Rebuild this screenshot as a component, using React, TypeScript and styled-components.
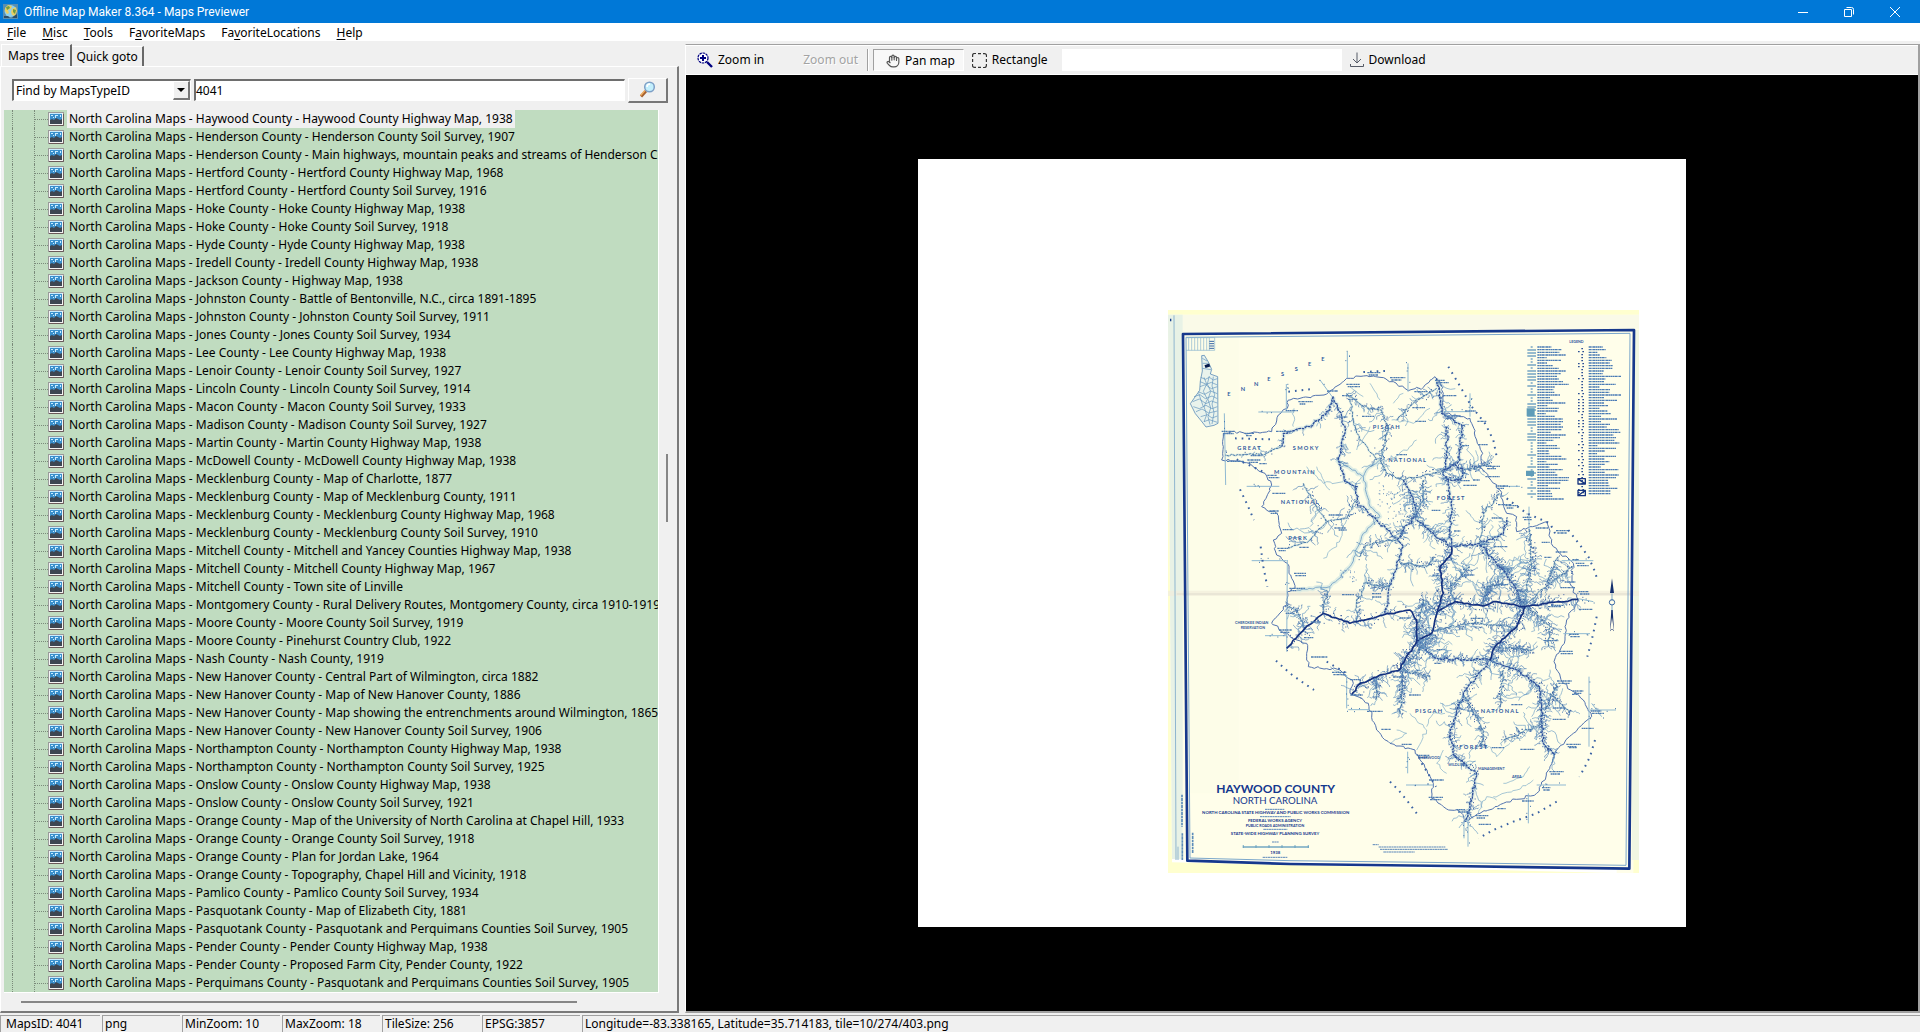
import React from "react";
import styled, { createGlobalStyle, css } from "styled-components";
import { Hand } from "lucide-react";

const face = "#f0f0f0";
const ui = '"Noto Sans", Tahoma, sans-serif';

const Global = createGlobalStyle`
  * { box-sizing: border-box; }
  html, body, #root { height: 100%; margin: 0; }
  body { overflow: hidden; background: ${face}; color: #000; font: 12px/18px ${ui}; }
  button, input, select { font: inherit; color: inherit; margin: 0; padding: 0; border: 0; border-radius: 0; background: none; outline: 0; }
`;

const Window = styled.div`
  display: flex;
  flex-direction: column;
  height: 100vh;
`;

const TitleBar = styled.header`
  display: flex;
  align-items: center;
  flex: none;
  height: 23px;
  padding-left: 3px;
  background: #0078d7;
  color: #fff;
`;

const Title = styled.h1`
  flex: 1;
  margin: 0 0 0 6px;
  font: 400 12px/20px Roboto, sans-serif;
`;

const WindowButton = styled.button`
  display: grid;
  place-items: center;
  width: 46px;
  height: 20px;

  &:last-child { margin-right: 2px; }
`;

const MenuBar = styled.nav`
  display: flex;
  flex: none;
  gap: 16px;
  height: 18px;
  padding: 1px 0 0 7px;
  background: #fff;
`;

const MenuItem = styled.button`
  height: 17px;
  line-height: 17px;
  u { text-underline-offset: 2px; }
`;

const Workspace = styled.main`
  display: flex;
  flex: 1;
  min-height: 0;
  gap: 6px;
`;

const Sidebar = styled.section`
  display: flex;
  flex-direction: column;
  width: 679px;
  flex: none;
  padding-top: 3px;
`;

const Tabs = styled.div`
  display: flex;
  align-items: flex-end;
  height: 22px;
  padding-left: 1px;
`;

const Tab = styled.button<{ $active?: boolean }>`
  height: ${(p) => (p.$active ? 22 : 20)}px;
  padding: 0 ${(p) => (p.$active ? 6 : 4)}px;
  border: solid #fff;
  border-width: 1px 0 0 ${(p) => (p.$active ? 1 : 0)}px;
  border-right: 2px solid #696969;
  line-height: ${(p) => (p.$active ? 18 : 19)}px;
`;

const TabPage = styled.div`
  display: flex;
  flex-direction: column;
  flex: 1;
  min-height: 0;
  padding: 11px 9px 0 3px;
  border: solid;
  border-width: 1px 2px 2px 1px;
  border-color: #fff #7a7a7a #7a7a7a #fff;
`;

const SearchRow = styled.form`
  display: flex;
  align-items: center;
  height: 24px;
  padding-left: 8px;
`;

const sunken = css`
  border: solid;
  border-width: 2px 1px 1px 2px;
  border-color: #6e6e6e #fff #fff #6e6e6e;
  background: #fff;
`;

const Combo = styled.div`
  ${sunken}
  position: relative;
  width: 179px;
  height: 22px;
  margin-right: 3px;
`;

const ComboSelect = styled.select`
  display: block;
  appearance: none;
  width: 100%;
  height: 19px;
  padding-left: 2px;
`;

const ComboArrow = styled.span`
  position: absolute;
  top: 0;
  right: 0;
  display: grid;
  place-items: center;
  width: 17px;
  height: 19px;
  border: solid;
  border-width: 1px 2px 2px 1px;
  border-color: #fff #777 #777 #fff;
  background: ${face};
  pointer-events: none;
`;

const SearchInput = styled.input`
  ${sunken}
  flex: 1;
  min-width: 0;
  height: 22px;
  margin-right: 3px;
`;

const SearchButton = styled.button`
  display: grid;
  place-items: center;
  width: 40px;
  height: 25px;
  border: solid;
  border-width: 1px 2px 2px 1px;
  border-color: #fff #777 #777 #fff;
`;

const TreeArea = styled.div`
  display: grid;
  grid-template: minmax(0, 1fr) 18px / minmax(0, 1fr) 9px;
  flex: 1;
  min-height: 0;
  margin-top: 8px;
`;

const Tree = styled.ul`
  margin: 0;
  padding: 0;
  overflow: hidden;
  list-style: none;
  background: #c0dcc0;
  border: solid #fff;
  border-width: 0 1px 1px 0;
`;

const TreeRow = styled.li`
  display: flex;
  align-items: center;
  height: 18px;
  white-space: nowrap;
`;

const Guides = styled.span`
  flex: none;
  align-self: stretch;
  box-sizing: content-box;
  width: 21px;
  margin-left: 8px;
  border: dotted #7a8a7a;
  border-width: 0 1px;
`;

const Branch = styled.span`
  flex: none;
  width: 13px;
  border-top: 1px dotted #7a8a7a;
`;

const RowText = styled.span<{ $selected?: boolean }>`
  margin-left: 3px;
  padding: 0 2px;
  background: ${(p) => (p.$selected ? face : "none")};
`;

const ScrollTrackY = styled.div`
  display: flex;
  flex-direction: column;
  align-items: flex-end;
`;

const ScrollThumbY = styled.span`
  width: 2px;
  height: 68px;
  background: #868686;
`;

const ScrollTrackX = styled.div`
  display: flex;
  align-items: center;
  padding-left: 17px;
`;

const ScrollThumbX = styled.span`
  width: 556px;
  height: 2px;
  background: #868686;
`;

const Spacer = styled.span<{ $grow: number }>`
  flex: ${(p) => p.$grow} 1 0;
`;

const Viewer = styled.section`
  display: flex;
  flex-direction: column;
  flex: 1;
  min-width: 0;
  margin-top: 3px;
  border: solid;
  border-width: 1px 2px 2px 1px;
  border-color: #a0a0a0 #a0a0a0 #a0a0a0 #fff;
`;

const ToolBar = styled.div`
  display: flex;
  align-items: center;
  flex: none;
  height: 30px;
  padding-left: 11px;
  border: solid #fff;
  border-width: 1px 0;
`;

const Tool = styled.button<{ $pressed?: boolean }>`
  display: flex;
  align-items: center;
  gap: 5px;
  height: 22px;
  white-space: nowrap;
  &:disabled { color: #a3a3a3; text-shadow: 1px 1px #fff; margin-left: 39px; }
  ${(p) =>
    p.$pressed &&
    css`
      margin-right: 8px;
      padding: 1px 8px 0 12px;
      border: solid;
      border-width: 1px;
      border-color: #a0a0a0 #fff #fff #a0a0a0;
      background: #f8f8f8;
    `}
`;

const Divider = styled.span`
  width: 2px;
  height: 22px;
  margin: 0 4px 0 9px;
  border-left: 1px solid #a0a0a0;
  border-right: 1px solid #fff;
`;

const ToolInput = styled.input`
  width: 280px;
  height: 22px;
  margin: 0 8px 0 14px;
  background: #fff;
`;

const Canvas = styled.div`
  display: grid;
  place-items: center;
  flex: 1;
  min-height: 0;
  overflow: hidden;
  background: #000;
`;

const Tile = styled.div`
  width: 768px;
  height: 768px;
  padding: 151px 0 0 250px;
  background: #fff;
`;

const StatusBar = styled.footer`
  display: flex;
  flex: none;
  gap: 2px;
  height: 19px;
  padding-top: 2px;
`;

const Cell = styled.span<{ $w?: number }>`
  ${(p) => (p.$w ? `width: ${p.$w}px;` : "flex: 1;")}
  padding-left: 2px;
  border: solid #a0a0a0;
  border-width: 1px 0 0 1px;
  line-height: 16px;
  white-space: nowrap;
  &:first-child { padding-left: 5px; }
`;

const entries = [
  "Haywood County - Haywood County Highway Map, 1938",
  "Henderson County - Henderson County Soil Survey, 1907",
  "Henderson County - Main highways, mountain peaks and streams of Henderson County",
  "Hertford County - Hertford County Highway Map, 1968",
  "Hertford County - Hertford County Soil Survey, 1916",
  "Hoke County - Hoke County Highway Map, 1938",
  "Hoke County - Hoke County Soil Survey, 1918",
  "Hyde County - Hyde County Highway Map, 1938",
  "Iredell County - Iredell County Highway Map, 1938",
  "Jackson County - Highway Map, 1938",
  "Johnston County - Battle of Bentonville, N.C., circa 1891-1895",
  "Johnston County - Johnston County Soil Survey, 1911",
  "Jones County - Jones County Soil Survey, 1934",
  "Lee County - Lee County Highway Map, 1938",
  "Lenoir County - Lenoir County Soil Survey, 1927",
  "Lincoln County - Lincoln County Soil Survey, 1914",
  "Macon County - Macon County Soil Survey, 1933",
  "Madison County - Madison County Soil Survey, 1927",
  "Martin County - Martin County Highway Map, 1938",
  "McDowell County - McDowell County Highway Map, 1938",
  "Mecklenburg County - Map of Charlotte, 1877",
  "Mecklenburg County - Map of Mecklenburg County, 1911",
  "Mecklenburg County - Mecklenburg County Highway Map, 1968",
  "Mecklenburg County - Mecklenburg County Soil Survey, 1910",
  "Mitchell County - Mitchell and Yancey Counties Highway Map, 1938",
  "Mitchell County - Mitchell County Highway Map, 1967",
  "Mitchell County - Town site of Linville",
  "Montgomery County - Rural Delivery Routes, Montgomery County, circa 1910-1919",
  "Moore County - Moore County Soil Survey, 1919",
  "Moore County - Pinehurst Country Club, 1922",
  "Nash County - Nash County, 1919",
  "New Hanover County - Central Part of Wilmington, circa 1882",
  "New Hanover County - Map of New Hanover County, 1886",
  "New Hanover County - Map showing the entrenchments around Wilmington, 1865",
  "New Hanover County - New Hanover County Soil Survey, 1906",
  "Northampton County - Northampton County Highway Map, 1938",
  "Northampton County - Northampton County Soil Survey, 1925",
  "Onslow County - Onslow County Highway Map, 1938",
  "Onslow County - Onslow County Soil Survey, 1921",
  "Orange County - Map of the University of North Carolina at Chapel Hill, 1933",
  "Orange County - Orange County Soil Survey, 1918",
  "Orange County - Plan for Jordan Lake, 1964",
  "Orange County - Topography, Chapel Hill and Vicinity, 1918",
  "Pamlico County - Pamlico County Soil Survey, 1934",
  "Pasquotank County - Map of Elizabeth City, 1881",
  "Pasquotank County - Pasquotank and Perquimans Counties Soil Survey, 1905",
  "Pender County - Pender County Highway Map, 1938",
  "Pender County - Proposed Farm City, Pender County, 1922",
  "Perquimans County - Pasquotank and Perquimans Counties Soil Survey, 1905",
];

const menus: [string, string, string][] = [
  ["", "F", "ile"],
  ["", "M", "isc"],
  ["", "T", "ools"],
  ["F", "a", "voriteMaps"],
  ["Fa", "v", "oriteLocations"],
  ["", "H", "elp"],
];

const status: [string, number?][] = [
  ["MapsID: 4041", 100],
  ["png", 78],
  ["MinZoom: 10", 98],
  ["MaxZoom: 18", 98],
  ["TileSize: 256", 98],
  ["EPSG:3857", 98],
  ["Longitude=-83.338165, Latitude=35.714183, tile=10/274/403.png"],
];

const GlobeIcon = () => (
  <svg width="15" height="15" viewBox="0 0 15 15" aria-hidden="true">
    <rect width="15" height="15" fill="#5a8fb0" />
    <circle cx="7.5" cy="7" r="6" fill="#8fd0ee" />
    <path d="M2 4 5 1l4 1-1 3-3 1 1 3-2 1-2-3zM9 5l4-2 1 4-2 5-3-1-1-3z" fill="#e9cf62" />
    <path d="M3 3l3-1 1 2-3 2zM10 5l3 1-1 4-2-2z" fill="#6f9b46" />
    <path d="M1 12h4l2 2H1zM11 12l3-2v4H9z" fill="#2d4f68" />
  </svg>
);

const PictureGlyph = styled.svg`
  flex: none;
`;

const PictureIcon = () => (
  <PictureGlyph width="16" height="16" viewBox="0 0 16 16" aria-hidden="true">
    <path d="M0 1h16v14H0z" fill="#9a9a9a" />
    <path d="M1 2h14v12H1z" fill="#f4f4f4" />
    <path d="M2 2h12v11H2z" fill="#3a8fcc" />
    <path d="M2 2h12v1H2zM3 4h2v1H3zM7 4h3v1H8v2H7zM12 4h1v2h-1zM5 6h1v1H5z" fill="#c9ecff" />
    <path d="M2 9l2-1 2 1 2-2 2 1 2 1 2-1v5H2z" fill="#3d4652" />
    <path d="M1 14.500h14.500V3" fill="none" stroke="#6a5a5a" />
  </PictureGlyph>
);

const LensIcon = () => (
  <svg width="17" height="17" viewBox="0 0 17 17" aria-hidden="true">
    <path d="M2 15.500 7 10" stroke="#a45f2d" strokeWidth="3" />
    <path d="M1.500 14.500 6 9.500" stroke="#efae63" strokeWidth="1.500" />
    <circle cx="10.500" cy="6" r="4.800" fill="#c3effc" stroke="#7d9fc6" strokeWidth="1.500" />
    <path d="M8 6q0-3 3-3" fill="none" stroke="#fff" strokeWidth="1.500" />
  </svg>
);

const ZoomInIcon = () => (
  <svg width="16" height="16" viewBox="0 0 16 16" aria-hidden="true" fill="none" stroke="#000080">
    <circle cx="6" cy="6" r="5" fill="#fff" strokeWidth="1.200" strokeDasharray="2.500 .7" />
    <path d="M6 3v6M3 6h6" strokeWidth="2" />
    <path d="M10 10l5 5" strokeWidth="2.400" />
  </svg>
);

const RectIcon = () => (
  <svg width="15" height="15" viewBox="0 0 15 15" aria-hidden="true" fill="none" stroke="#333" strokeWidth="1.200">
    <path d="M.6 4V2.500q0-2 2-2H4M6 .6h3M11 .6h1.500q2 0 2 2V4M14.400 6v3M14.400 11v1.500q0 2-2 2H11M9 14.400H6M4 14.400H2.500q-2 0-2-2V11M.6 9V6" />
  </svg>
);

const DownloadIcon = () => (
  <svg width="14" height="16" viewBox="0 0 14 16" aria-hidden="true" fill="none" stroke="#555a66">
    <path d="M7 .5V11M3 7l4 4 4-4M.5 12v2.500h13V12" />
  </svg>
);

type Pt = [number, number];

const boundary: Pt[] = [
  [220, 400], [245, 395], [300, 400], [365, 395], [385, 345], [412, 325], [415, 300], [460, 292], [530, 282], [550, 268],
  [590, 235], [640, 228], [690, 232], [730, 245], [775, 272], [820, 262], [855, 230], [870, 245], [880, 280], [875, 340],
  [930, 350], [960, 355], [980, 420], [998, 460], [990, 500], [1050, 570], [1070, 640], [1100, 650], [1100, 695],
  [1140, 680], [1190, 665], [1210, 740], [1270, 790], [1260, 850], [1285, 900], [1250, 960], [1245, 1020], [1212, 1085],
  [1240, 1150], [1300, 1200], [1325, 1250], [1270, 1300], [1220, 1350], [1200, 1400], [1160, 1480], [1060, 1510],
  [990, 1540], [945, 1565], [930, 1535], [880, 1520], [845, 1495], [850, 1450], [795, 1350], [720, 1330], [680, 1290],
  [655, 1210], [600, 1180], [610, 1150], [570, 1110], [475, 1100], [470, 1030], [420, 1010], [365, 970], [410, 915],
  [412, 875], [435, 865], [412, 790], [380, 765], [370, 720], [395, 700], [380, 640], [335, 620], [365, 555], [345, 520],
  [290, 488], [215, 480], [220, 400],
];

const highways: Pt[][] = [
  [[605, 1185], [625, 1155], [690, 1125], [745, 1112], [800, 1025], [845, 1000], [862, 935], [915, 905], [1000, 918], [1030, 905], [1120, 920], [1285, 898]],
  [[410, 1045], [465, 985], [520, 940], [600, 970], [700, 945], [780, 930], [800, 960], [800, 1025]],
  [[862, 935], [880, 880], [870, 800], [905, 760], [905, 740]],
  [[1125, 920], [1100, 980], [1035, 1040], [1020, 1080]],
];

// Each secondary road carries the number and reach of the creeks that leave it.
const roads: { at: Pt[]; creeks: number; reach: number; dark?: boolean }[] = [
  { at: [[550, 290], [575, 350], [585, 400], [565, 480], [585, 545], [620, 560], [620, 610], [680, 660], [740, 715], [760, 740], [725, 840], [705, 940]], creeks: 36, reach: 16, dark: true },
  { at: [[1020, 1080], [940, 1180], [900, 1300], [915, 1370], [980, 1420], [965, 1500], [945, 1565]], creeks: 70, reach: 18, dark: true },
  { at: [[1020, 1080], [1100, 1110], [1170, 1160], [1180, 1330], [1215, 1365]], creeks: 70, reach: 20, dark: true },
  { at: [[860, 235], [870, 280], [875, 340], [935, 375], [930, 480], [890, 510], [890, 380]], creeks: 40, reach: 14, dark: true },
  { at: [[880, 510], [905, 495], [940, 505], [935, 535], [900, 540], [880, 525], [880, 510]], creeks: 26, reach: 18, dark: true },
  { at: [[895, 540], [905, 620], [900, 700], [905, 740], [990, 730], [1060, 700], [1070, 660]], creeks: 36, reach: 18, dark: true },
  { at: [[990, 730], [1000, 640], [1050, 580]], creeks: 16, reach: 16 },
  { at: [[990, 735], [1060, 810], [1100, 870], [1120, 920]], creeks: 60, reach: 24, dark: true },
  { at: [[1140, 690], [1145, 800], [1130, 860], [1120, 920]], creeks: 34, reach: 22 },
  { at: [[1270, 800], [1200, 850], [1120, 920]], creeks: 24, reach: 20 },
  { at: [[1225, 770], [1190, 850]], creeks: 12, reach: 18 },
  { at: [[550, 290], [540, 330], [480, 380], [400, 400], [395, 440]], creeks: 12, reach: 14, dark: true },
  { at: [[395, 440], [340, 465], [225, 465]], creeks: 4, reach: 16 },
  { at: [[460, 550], [500, 620], [530, 665], [590, 655], [620, 600]], creeks: 16, reach: 24 },
  { at: [[530, 665], [480, 720], [415, 745]], creeks: 6, reach: 26 },
  { at: [[860, 265], [790, 310], [740, 360]], creeks: 12, reach: 16 },
  { at: [[590, 280], [640, 320], [695, 330], [715, 390], [690, 480], [710, 520], [760, 540], [880, 510]], creeks: 40, reach: 18 },
  { at: [[600, 300], [620, 400], [680, 480]], creeks: 6, reach: 26 },
  { at: [[760, 540], [790, 600], [800, 640], [760, 690], [740, 720]], creeks: 30, reach: 22, dark: true },
  { at: [[820, 540], [820, 600], [790, 650]], creeks: 20, reach: 18 },
  { at: [[800, 660], [850, 700], [905, 740]], creeks: 20, reach: 18, dark: true },
  { at: [[940, 510], [990, 500], [1020, 490]], creeks: 18, reach: 20 },
  { at: [[800, 1030], [860, 1075], [1020, 1080]], creeks: 32, reach: 18, dark: true },
  { at: [[860, 990], [960, 970], [1060, 975], [1100, 985]], creeks: 34, reach: 20 },
  { at: [[1130, 920], [1200, 980], [1195, 1040]], creeks: 26, reach: 20 },
  { at: [[1035, 1040], [1090, 1045], [1150, 1050]], creeks: 26, reach: 16 },
  { at: [[760, 1110], [755, 1180], [750, 1240]], creeks: 34, reach: 14 },
  { at: [[745, 1112], [800, 1060], [845, 1000]], creeks: 40, reach: 28 },
  { at: [[680, 1130], [680, 1200]], creeks: 14, reach: 16 },
  { at: [[760, 1110], [840, 1130]], creeks: 16, reach: 14 },
  { at: [[1060, 1110], [1050, 1220]], creeks: 14, reach: 16 },
  { at: [[945, 1190], [1000, 1290], [995, 1340]], creeks: 30, reach: 16 },
  { at: [[1180, 1270], [1110, 1300], [1060, 1320]], creeks: 18, reach: 16 },
  { at: [[1185, 1230], [1220, 1150]], creeks: 14, reach: 14 },
  { at: [[1200, 1180], [1260, 1240]], creeks: 12, reach: 12 },
  { at: [[740, 720], [650, 735], [630, 770]], creeks: 14, reach: 20 },
  { at: [[750, 790], [830, 800], [850, 770]], creeks: 18, reach: 20 },
  { at: [[720, 860], [640, 850]], creeks: 16, reach: 18 },
  { at: [[520, 940], [530, 870]], creeks: 10, reach: 18 },
  { at: [[620, 970], [620, 900], [640, 870]], creeks: 10, reach: 16 },
  { at: [[860, 935], [820, 900], [800, 1000]], creeks: 34, reach: 24 },
  { at: [[915, 905], [900, 860], [960, 800]], creeks: 26, reach: 20 },
  { at: [[1000, 918], [1010, 860], [1060, 850]], creeks: 34, reach: 22 },
  { at: [[465, 985], [440, 930], [410, 915]], creeks: 14, reach: 16 },
];

const parkways: Pt[][] = [
  [[560, 480], [640, 530], [660, 500], [690, 480]],
  [[640, 530], [660, 620], [690, 650], [640, 700], [600, 800], [540, 860], [440, 870]],
];

const streams: Pt[][] = [
  [[590, 660], [560, 740], [520, 775]], [[430, 380], [432, 325]], [[730, 480], [800, 420]],
  [[725, 360], [790, 370], [840, 325]], [[620, 450], [660, 380]], [[690, 300], [660, 250]],
  [[730, 310], [760, 280]], [[640, 290], [600, 260]], [[780, 1240], [830, 1290], [800, 1350]],
  [[885, 1240], [850, 1240], [830, 1280]], [[890, 1420], [860, 1390], [880, 1350]], [[1060, 1450], [1120, 1430], [1140, 1400]],
  [[1030, 1490], [1100, 1470], [1150, 1440]], [[1020, 1340], [1040, 1370], [1080, 1330]], [[740, 1290], [770, 1300], [720, 1330]],
  [[985, 1540], [1010, 1490], [1040, 1500]], [[540, 1100], [590, 1130]], [[1060, 660], [1030, 640]],
  [[355, 455], [400, 430]], [[470, 500], [520, 550], [580, 545]], [[500, 500], [540, 570]],
];

const dotRows: Pt[][] = [
  [[895, 200], [925, 250], [965, 320], [1005, 370], [1030, 420], [1042, 480]],
  [[1255, 690], [1290, 735], [1315, 770], [1335, 815], [1342, 840]],
  [[1340, 950], [1330, 1000], [1320, 1040], [1312, 1070]],
  [[1335, 1320], [1320, 1370], [1300, 1410], [1287, 1430]],
  [[1220, 1505], [1160, 1540], [1090, 1565], [1030, 1590], [985, 1615]],
  [[720, 1445], [745, 1470], [770, 1500], [800, 1540]],
  [[378, 1082], [420, 1120], [455, 1145], [492, 1170]],
  [[270, 568], [290, 610], [312, 660]], [[332, 740], [340, 800], [352, 860]],
  [[640, 216], [720, 212]], [[255, 415], [360, 418]], [[260, 478], [350, 520]],
  [[1070, 595], [1130, 640], [1200, 670], [1220, 710]], [[815, 1390], [840, 1430], [858, 1460]],
  [[530, 1085], [590, 1120]], [[415, 275], [480, 268]],
];

const spacedLabels: [string, number, number][] = [
  ["G R E A T", 262, 449], ["S M O K Y", 428, 449], ["M O U N T A I N", 372, 523], ["N A T I O N A L", 392, 613],
  ["P A R K", 415, 719], ["P I S G A H", 668, 387], ["N A T I O N A L", 715, 487], ["F O R E S T", 860, 601],
  ["P I S G A H", 795, 1238], ["N A T I O N A L", 992, 1238], ["F O R E S T", 928, 1347],
];

const arcLetters: [string, number, number][] = [
  ["E", 232, 287], ["N", 272, 272], ["N", 312, 257], ["E", 352, 242], ["S", 393, 227], ["S", 434, 212], ["E", 474, 197], ["E", 514, 182],
];

const meridians: Pt[][] = [
  [[592, 156], [592, 235]], [[774, 190], [774, 275]], [[409, 252], [409, 330]], [[223, 340], [227, 555]],
  [[325, 336], [432, 336]], [[290, 559], [388, 559]], [[305, 782], [410, 782]], [[412, 780], [410, 1055]],
  [[960, 280], [960, 350]], [[880, 335], [958, 335]], [[1137, 620], [1137, 690]], [[1050, 559], [1110, 559]],
  [[1235, 782], [1330, 782]], [[1240, 1001], [1320, 1001]], [[345, 1007], [410, 1007]], [[590, 1125], [590, 1225]],
  [[595, 1229], [660, 1229]], [[1317, 1130], [1317, 1340]], [[1320, 1230], [1398, 1230]], [[773, 1355], [773, 1420]],
  [[768, 1455], [850, 1455]], [[1160, 1455], [1248, 1455]], [[1135, 1480], [1135, 1570]], [[954, 1560], [954, 1640]],
  [[942, 1565], [942, 1615]], [[1325, 1210], [1355, 1250]], [[1285, 896], [1330, 905]], [[510, 240], [550, 295]],
];

const random = (seed: number) => () => {
  seed = (seed * 1664525 + 1013904223) >>> 0;
  return seed / 4294967296;
};

const along = (pts: Pt[], t: number): { p: Pt; a: number } => {
  const lens = pts.slice(1).map((q, i) => Math.hypot(q[0] - pts[i][0], q[1] - pts[i][1]));
  let d = t * lens.reduce((s, l) => s + l, 0);
  let i = 0;
  while (i < lens.length - 1 && d > lens[i]) d -= lens[i++];
  const [a, b] = [pts[i], pts[i + 1]];
  const k = d / lens[i];
  return { p: [a[0] + (b[0] - a[0]) * k, a[1] + (b[1] - a[1]) * k], a: Math.atan2(b[1] - a[1], b[0] - a[0]) };
};

const toPath = (pts: Pt[]) => "M" + pts.map((p) => p.map(Math.round).join(" ")).join("L");

const wiggle = (pts: Pt[], amp: number, seed: number) => {
  const r = random(seed);
  const out: Pt[] = [pts[0]];
  for (let i = 1; i < pts.length; i++) {
    const [a, b] = [pts[i - 1], pts[i]];
    const n = Math.max(1, Math.round(Math.hypot(b[0] - a[0], b[1] - a[1]) / 10));
    for (let k = 1; k <= n; k++) {
      const j = k === n ? 0 : amp;
      out.push([a[0] + ((b[0] - a[0]) * k) / n + (r() - 0.5) * j * 2, a[1] + ((b[1] - a[1]) * k) / n + (r() - 0.5) * j * 2]);
    }
  }
  return toPath(out);
};

const creeksOf = (pts: Pt[], count: number, reach: number, seed: number) => {
  const r = random(seed);
  let d = "";
  for (let i = 0; i < count; i++) {
    const { p, a } = along(pts, r());
    let dir = a + (r() > 0.5 ? 1 : -1) * (0.6 + r() * 0.9);
    const line: Pt[] = [p];
    let [x, y] = p;
    const steps = 3 + Math.floor(r() * 6);
    for (let s = 0; s < steps; s++) {
      const turn = dir + (r() - 0.5) * 2;
      dir += (r() - 0.5) * 0.6;
      x += (Math.cos(turn) * reach) / 5;
      y += (Math.sin(turn) * reach) / 5;
      line.push([x, y]);
    }
    d += toPath(line);
  }
  return d;
};

const specksOf = (pts: Pt[], count: number, spread: number, seed: number) => {
  const r = random(seed);
  let d = "";
  for (let i = 0; i < count; i++) {
    const { p } = along(pts, r());
    d += `M${Math.round(p[0] + (r() - 0.5) * spread)} ${Math.round(p[1] + (r() - 0.5) * spread)}h3`;
  }
  return d;
};

const captionsOf = () => {
  const r = random(77);
  let d = "";
  for (let i = 0; i < 60; i++) {
    const { p } = along(boundary, i / 60);
    const x = Math.round(p[0] + (r() - 0.4) * 40);
    const y = Math.round(p[1] + (r() - 0.5) * 24);
    d += `M${x} ${y}h${Math.round(24 + r() * 26)}`;
    if (r() > 0.5) d += `M${x + 4} ${y + 7}h${Math.round(18 + r() * 20)}`;
  }
  for (let i = 0; i < 60; i++) {
    const road = roads[i % roads.length].at;
    const { p } = along(road, r());
    d += `M${Math.round(p[0] + 20 + r() * 30)} ${Math.round(p[1] + (r() - 0.5) * 70)}h${Math.round(18 + r() * 26)}`;
  }
  return d;
};

const legendLines = (x: number, top: number, bottom: number, seed: number) => {
  const r = random(seed);
  let d = "";
  for (let y = top; y < bottom; y += 8) d += `M${x} ${y}h${Math.round(24 + r() * 76)}`;
  return d;
};

const legendMarks = (x: number, top: number, bottom: number, seed: number) => {
  const r = random(seed);
  let d = "";
  for (let y = top; y < bottom; y += 9) d += r() > 0.5 ? `M${x} ${y}h26` : `M${x + 10} ${y}h6`;
  return d;
};

const MapSheet = styled.svg`
  display: block;
  font-family: Lato, sans-serif;
`;

const CountyMap = () => (
  <MapSheet width="471" height="563" viewBox="54 30 1413 1689" role="img" aria-label="Haywood County, North Carolina highway map">
    <rect x="54" y="30" width="1413" height="1689" fill="#ffffcf" />
    <path d="M54 44H1467L1450 1719H1400L420 1690 66 1682Z" fill="#fffeea" />
    <path d="M54 44H1467V86L98 98V1682H66Z" fill="#fafae8" />
    <path d="M54 44H98V1682H66Z" fill="#e8f2e6" />
    <path d="M1455 90h12V1680h-22z" fill="#f0f6e2" />
    <path d="M112 110H266V1480H116Z" fill="#fdfde8" />
    <path d="M54 872H1467V888H54Z" fill="#f1ecdc" opacity=".7" />
    <path d="M80 882H1450" stroke="#dedacd" strokeWidth="3" />
    <path d="M66 1682 420 1690 1400 1714" stroke="#fff" strokeWidth="10" fill="none" />
    <g fill="none" strokeLinejoin="round">
      <path d="M72 46 78 1680M84 1640V1680" stroke="#8fb6cf" strokeWidth="3" />
      <path d="M62 56v8" stroke="#1a3f8c" strokeWidth="4" />
      <path d="M99 102 1452 90 1438 1706 900 1698 420 1692 112 1682Z" stroke="#16388c" strokeWidth="8" />
      <path d="M108 112 1440 100 1428 1696 900 1688 420 1682 120 1674Z" stroke="#7ba7cb" strokeWidth="3" />
      <path d="M108 113h86v38h-86M116 113v38M125 113v38M134 113v38M143 113v38M152 113v38M161 113v38M170 113v38M178 113v38" stroke="#8ab3cf" strokeWidth="2" />
      <path d="M178 124h14M178 131h14M178 138h14M178 145h14" stroke="#3765a5" strokeWidth="3" />
      <path d="M155 167l8-1 12 20 10 22-4 14 22 8 1 140-12 6-24 5-14-18-18-22-15-30 28-40 2-28 6-30z" stroke="#3b74ae" strokeWidth="2" fill="#e9f3ec" />
      <path
        d="M157 175l14 8M158 190h16M157 205l26 4M152 232l14 6 12-6 12 8 12-4M150 245l20 8 14-6 18 8M150 260l16-6 18 12 18-6M144 275l20 8 18-10 20 8M132 290l18-6 16 12 20-8 16 8M128 305l20-8 20 14 16-8 18 6M130 320l18 6 20-10 18 10 16-6M138 335l18-8 20 12 26-6M152 350l20-6 14 10 16-6M162 365l16-6 24 8M162 232l8 20-10 22 12 24-10 22 8 24-8 22M178 228l-6 24 10 22-8 24 8 26-8 26 6 24M190 230l-4 28 8 26-8 28 6 26-6 34M146 280l14 40"
        stroke="#5f93bd"
        strokeWidth="2"
      />
      <path d="M165 200l14-5" stroke="#061a4d" strokeWidth="9" />
      <path d={parkways.map((s, i) => wiggle(s, 3, 40 + i)).join("")} stroke="#d8eae2" strokeWidth="13" opacity=".8" />
      <path d={parkways.map((s, i) => wiggle(s, 3, 40 + i)).join("")} stroke="#7faacb" strokeWidth="3" />
      <path d={streams.map((s, i) => wiggle(s, 4, 40 + i)).join("")} stroke="#7aabc8" strokeWidth="2" />
      <path d={wiggle(boundary, 4, 5)} stroke="#5273b0" strokeWidth="3" />
      <path d={meridians.map(toPath).join("")} stroke="#8fb9d2" strokeWidth="3" />
      <path d={meridians.map((m, i) => specksOf(m, 4, 14, i + 9)).join("")} stroke="#4274ab" strokeWidth="3" />
      {roads.map((road, i) => (
        <g key={i}>
          <path d={wiggle(road.at, 4, i + 2)} stroke="#cce3e2" strokeWidth={road.dark ? 12 : 7} opacity=".5" />
          <path d={creeksOf(road.at, road.creeks, road.reach * 1.2, i + 90)} stroke="#5585b8" strokeWidth="2" />
          <path d={creeksOf(road.at, Math.round(road.creeks / 4), road.reach * 2.6, i + 300)} stroke="#6c9fc6" strokeWidth="2" />
          <path d={specksOf(road.at, road.creeks * 2, road.reach * 1.3, i + 190)} stroke="#3c62a4" strokeWidth="3" />
          <path d={wiggle(road.at, 4, i + 2)} stroke={road.dark ? "#2d4f9a" : "#4a79a8"} strokeWidth={road.dark ? 4 : 3} strokeDasharray="8 2" />
        </g>
      ))}
      {highways.map((h, i) => (
        <g key={i}>
          <path d={creeksOf(h, i === 0 ? 130 : 50, 28, i + 500)} stroke="#5e8dbd" strokeWidth="2" />
          <path d={specksOf(h, i === 0 ? 200 : 80, 40, i + 520)} stroke="#3b5da0" strokeWidth="3" />
          <path d={wiggle(h, 2, i + 60)} stroke="#14317f" strokeWidth="5" />
        </g>
      ))}
      <path d={specksOf([[700, 580], [760, 620], [720, 660]], 70, 80, 8)} stroke="#6d93c0" strokeWidth="3" />
      <path d={specksOf([[580, 820], [610, 835]], 20, 30, 18)} stroke="#6d93c0" strokeWidth="3" />
      <path d={captionsOf()} stroke="#4f7db2" strokeWidth="4" strokeDasharray="6 1 3 1" />
      <path d={dotRows.map(toPath).join("")} stroke="#3a62a4" strokeWidth="6" strokeDasharray="5 15" />
      <path d={legendLines(1162, 141, 600, 4)} stroke="#4a7bb5" strokeWidth="4" strokeDasharray="7 1 4 1" />
      <path d={legendLines(1316, 141, 585, 12)} stroke="#4a7bb5" strokeWidth="4" strokeDasharray="7 1 4 1" />
      <path d={legendMarks(1132, 141, 600, 6)} stroke="#75a5c4" strokeWidth="4" />
      <path d={legendMarks(1284, 146, 585, 15)} stroke="#2d5095" strokeWidth="4" strokeDasharray="5 8" />
      <path d="M1142 325v24M1140 512v16" stroke="#5f9cb8" strokeWidth="24" />
      <path d="M1284 536h22v16h-22zM1284 571h22v16h-22zM1286 538l18 12M1286 586l18-14" stroke="#173580" strokeWidth="4" />
      <path d="M1386 880v22M1386 914v24" stroke="#7da9c8" strokeWidth="3" />
      <circle cx="1386" cy="907" r="8" stroke="#3a69a5" strokeWidth="3" />
      <path d="M280 1641H475M280 1636v8M318 1636v8M357 1636v8M396 1636v8M435 1636v8M475 1636v8" stroke="#74a8c2" strokeWidth="4" />
      <path d="M345 1528h58M330 1550h92M340 1588h72M366 1626h20M338 1672h74M668 1634h18M686 1641h200M690 1648h204M700 1656h94" stroke="#5c88ba" strokeWidth="3" strokeDasharray="8 1 5 1" />
      <path d="M96 1484V1580M97 1600V1680M128 1598V1660" stroke="#5c8cba" strokeWidth="5" strokeDasharray="7 2 10 2" />
    </g>
    <path d="M1386 835l6 44h-12zM1386 952l-6 42 6-8 6 8zM1384 930h4l4 60h-12z" fill="#15306f" />
    <g fill="#2f5aa0" fontSize="17" fontWeight="700">
      {spacedLabels.map(([t, x, y]) => (
        <text key={t + x} x={x} y={y}>{t}</text>
      ))}
      {arcLetters.map(([t, x, y]) => (
        <text key={x} x={x} y={y}>{t}</text>
      ))}
    </g>
    <g fill="#2c559c" fontSize="11" fontWeight="700">
      <text x="255" y="971">CHEROKEE INDIAN</text>
      <text x="272" y="986">RESERVATION</text>
      <text x="805" y="1376">SHERWOOD</text>
      <text x="894" y="1397">WILDLIFE</text>
      <text x="984" y="1409">MANAGEMENT</text>
      <text x="1086" y="1433">AREA</text>
      <text x="1258" y="130">LEGEND</text>
    </g>
    <g fill="#14388e" textAnchor="middle">
      <text x="377" y="1479" fontSize="36" fontWeight="700">HAYWOOD COUNTY</text>
      <text x="375" y="1513" fontSize="29">NORTH CAROLINA</text>
      <text x="377" y="1543" fontSize="13" fontWeight="700">NORTH CAROLINA STATE HIGHWAY AND PUBLIC WORKS COMMISSION</text>
      <text x="375" y="1566" fontSize="13" fontWeight="700">FEDERAL WORKS AGENCY</text>
      <text x="375" y="1581" fontSize="11" fontWeight="700">PUBLIC ROADS ADMINISTRATION</text>
      <text x="375" y="1606" fontSize="13" fontWeight="700">STATE-WIDE HIGHWAY PLANNING SURVEY</text>
      <text x="376" y="1662" fontSize="13" fontWeight="700">1938</text>
    </g>
  </MapSheet>
);

export default function App() {
  return (
    <Window>
      <Global />
      <TitleBar>
        <GlobeIcon />
        <Title>Offline Map Maker 8.364 - Maps Previewer</Title>
        <WindowButton aria-label="Minimize">
          <svg width="10" height="10"><path d="M0 5.500h10" stroke="#fff" /></svg>
        </WindowButton>
        <WindowButton aria-label="Restore">
          <svg width="10" height="10" fill="none" stroke="#fff"><path d="M.5 2.500h7v7h-7zM2.500.5h5q2 0 2 2v5" /></svg>
        </WindowButton>
        <WindowButton aria-label="Close">
          <svg width="10" height="10"><path d="M0 0l10 10M10 0 0 10" stroke="#fff" /></svg>
        </WindowButton>
      </TitleBar>
      <MenuBar>
        {menus.map(([a, k, b]) => (
          <MenuItem key={b}>{a}<u>{k}</u>{b}</MenuItem>
        ))}
      </MenuBar>
      <Workspace>
        <Sidebar>
          <Tabs role="tablist">
            <Tab role="tab" aria-selected="true" $active>Maps tree</Tab>
            <Tab role="tab" aria-selected="false">Quick goto</Tab>
          </Tabs>
          <TabPage>
            <SearchRow onSubmit={(e) => e.preventDefault()}>
              <Combo>
                <ComboSelect aria-label="Search mode">
                  <option>Find by MapsTypeID</option>
                </ComboSelect>
                <ComboArrow>
                  <svg width="8" height="4"><path d="M0 0h8L4 4z" /></svg>
                </ComboArrow>
              </Combo>
              <SearchInput aria-label="Search text" defaultValue="4041" />
              <SearchButton aria-label="Search"><LensIcon /></SearchButton>
            </SearchRow>
            <TreeArea>
              <Tree>
                {entries.map((entry, i) => (
                  <TreeRow key={entry}>
                    <Guides />
                    <Branch />
                    <PictureIcon />
                    <RowText $selected={i === 0}>North Carolina Maps - {entry}</RowText>
                  </TreeRow>
                ))}
              </Tree>
              <ScrollTrackY>
                <Spacer $grow={344} />
                <ScrollThumbY />
                <Spacer $grow={470} />
              </ScrollTrackY>
              <ScrollTrackX><ScrollThumbX /></ScrollTrackX>
            </TreeArea>
          </TabPage>
        </Sidebar>
        <Viewer>
          <ToolBar>
            <Tool><ZoomInIcon />Zoom in</Tool>
            <Tool disabled>Zoom out</Tool>
            <Divider />
            <Tool $pressed aria-pressed="true"><Hand size={14} strokeWidth={2} color="#555" />Pan map</Tool>
            <Tool><RectIcon />Rectangle</Tool>
            <ToolInput aria-label="Region" />
            <Tool><DownloadIcon />Download</Tool>
          </ToolBar>
          <Canvas>
            <Tile><CountyMap /></Tile>
          </Canvas>
        </Viewer>
      </Workspace>
      <StatusBar>
        {status.map(([text, w]) => (
          <Cell key={text} $w={w}>{text}</Cell>
        ))}
      </StatusBar>
    </Window>
  );
}
